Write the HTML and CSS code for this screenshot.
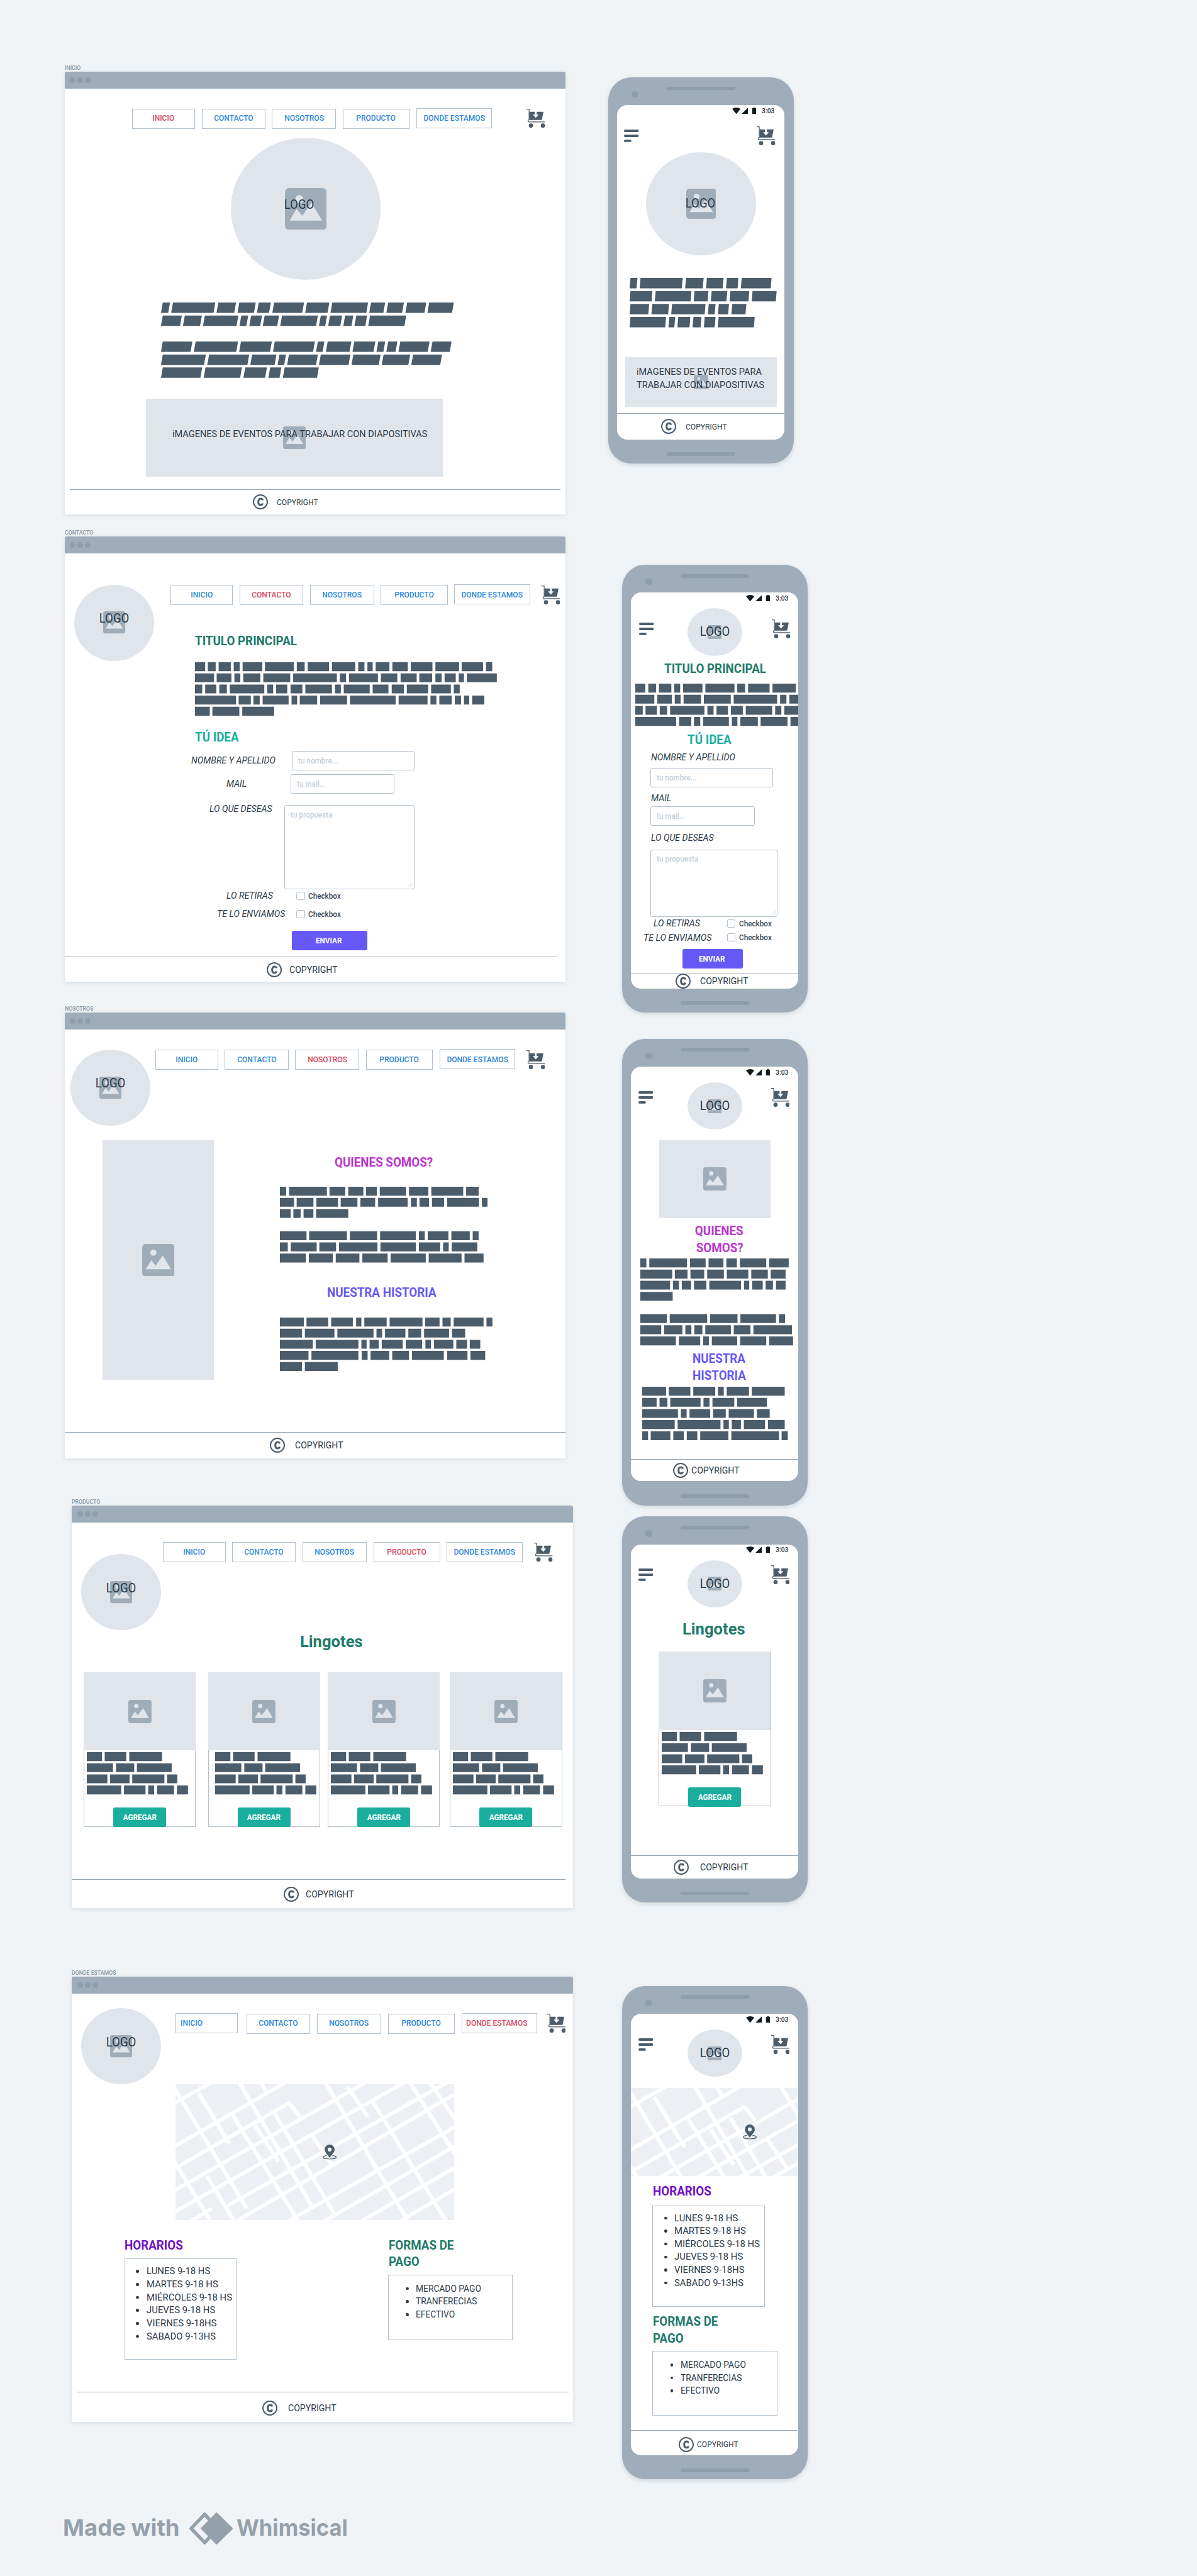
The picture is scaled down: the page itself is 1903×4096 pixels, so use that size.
FILE: index.html
```html
<!DOCTYPE html>
<html lang="es">
<head>
<meta charset="utf-8">
<title>Wireframes - Lingotes</title>
<link rel="stylesheet" href="styles.css">
</head>
<body>
<svg class="defs" aria-hidden="true">
  <symbol id="picture" viewBox="0 0 90 90"><rect width="90" height="90" rx="9" fill="#9eadb9"/><circle cx="31" cy="24" r="8.6" fill="#e0e5ec"/><path d="M10 70L25 45l12.500 15L57 32l23 38z" fill="#e0e5ec"/></symbol>
  <symbol id="cart" viewBox="0 0 40 41"><path d="M0 .8h5.600v23H5.500a2.300 2.300 0 0 0 0 4.600H40" fill="none" stroke="#4b5c6b" stroke-width="1.600"/><path d="M6 6.500h12v6.200h-4.200L20 19.500l6.200-6.800H22V6.500h14.600L33 24H6z" fill="#4b5c6b"/><circle cx="9.500" cy="36.200" r="4.600" fill="#4b5c6b"/><circle cx="35.400" cy="36.200" r="4.600" fill="#4b5c6b"/></symbol>
  <symbol id="copy" viewBox="0 0 32 32"><circle cx="16" cy="16" r="14.700" fill="none" stroke="#4b5c6b" stroke-width="2.700"/><path d="M20.800 12.700c-.5-2.200-2.200-3.300-4.300-3.300-3.200 0-4.900 2.200-4.900 6.600s1.700 6.600 4.900 6.600c2.100 0 3.800-1.100 4.300-3.300" fill="none" stroke="#4b5c6b" stroke-width="4"/></symbol>
  <symbol id="menu" viewBox="0 0 32 27"><path d="M2.600 2.700h26.800M2.600 13.500h26.800M2.600 24.300h10.800" stroke="#4b5c6b" stroke-width="5.200" stroke-linecap="round"/></symbol>
  <symbol id="status" viewBox="0 0 52 14"><path d="M0 2.600Q9-2.600 18 2.600L9 14z" fill="#0f1a22"/><path d="M20 14L34 .2V14z" fill="#0f1a22"/><path d="M43 1.200h2.600V0h3.800v1.200H52V14h-9z" fill="#0f1a22"/></symbol>
  <symbol id="pin" viewBox="0 0 30 32"><path d="M9 23.500C3.800 24.300.9 25.600.9 27.200c0 2.300 6.300 4 14.100 4s14.100-1.700 14.100-4c0-1.600-2.900-2.900-8.100-3.700" fill="none" stroke="#4b5c6b" stroke-width="1.700"/><path fill-rule="evenodd" d="M15 28.500C11 21.500 4.300 17 4.300 10.700a10.700 10.700 0 0 1 21.400 0C25.700 17 19 21.500 15 28.500zM15 15a4.200 4.200 0 1 0 0-8.400 4.200 4.200 0 0 0 0 8.400z" fill="#4b5c6b"/></symbol>
  <symbol id="streets" viewBox="0 0 840 459">
    <g fill="none" stroke="#fff" stroke-width="12">
      <path d="M-10 69L110-8M-10 215L335-8M-10 290L345 62M-10 364L580-10M-10 436L700-12M60 544L840 35M158 410l700-440M250 520L850 140M360 520L850 205M470 520L850 278M590 520L850 350M-10 500L110 420"/>
      <path d="M-10 0L215 420M70 30l92 170M190-10l220 420M255-10l20 38M340 60l35 50M450-10L700 460M520 10l60 100M590 50l230 420M705-10l140 250M765-10l80 130M-10 250L110 470M170 100l210 380M240 140l70 120M410 170l60 100M95 310l80 150M300 100l180 340"/>
    </g>
  </symbol>
</svg>

<div class="board">
  <div class="desktop-column">

    <p class="label">INICIO</p>
    <section class="frame home">
      <header class="bar"><i></i><i></i><i></i></header>
      <div class="top">
        <nav><a class="on"><span>INICIO</span></a><a><span>CONTACTO</span></a><a><span>NOSOTROS</span></a><a><span>PRODUCTO</span></a><a><span>DONDE ESTAMOS</span></a></nav>
        <svg class="cart"><use href="#cart"/></svg>
      </div>
      <div class="logo"><svg><use href="#picture"/></svg><b>LOGO</b></div>
      <svg class="bars italic" viewBox="0 0 895 60" preserveAspectRatio="none">
        <path d="M0 4h900" stroke-dasharray="22 9 129 9 54 10 50 9 37 10 91 9 68 9 109 9 43 9 48 10 58 9 75 2000"/>
        <path d="M0 14h900" stroke-dasharray="58 9 52 9 102 9 21 9 33 8 44 9 109 9 19 9 37 9 25 9 33 9 110 2000"/>
        <path d="M0 34h900" stroke-dasharray="90 10 129 9 94 9 122 9 20 10 72 9 64 9 21 9 28 9 89 9 58 2000"/>
        <path d="M0 44h900" stroke-dasharray="131 10 122 9 74 9 20 9 88 9 90 9 83 9 81 9 88 2000"/>
        <path d="M0 54h900" stroke-dasharray="120 10 111 10 66 10 34 10 104 2000"/>
      </svg>
      <div class="slides"><svg><use href="#picture"/></svg><b>iMAGENES DE EVENTOS PARA TRABAJAR CON DIAPOSITIVAS</b></div>
      <footer class="foot small"><svg><use href="#copy"/></svg><span>COPYRIGHT</span></footer>
    </section>

    <p class="label">CONTACTO</p>
    <section class="frame contact">
      <header class="bar"><i></i><i></i><i></i></header>
      <div class="split">
        <div class="logo"><svg><use href="#picture"/></svg><b>LOGO</b></div>
        <div class="main">
          <div class="top">
            <nav><a><span>INICIO</span></a><a class="on"><span>CONTACTO</span></a><a><span>NOSOTROS</span></a><a><span>PRODUCTO</span></a><a><span>DONDE ESTAMOS</span></a></nav>
            <svg class="cart"><use href="#cart"/></svg>
          </div>
          <h2 class="green">TITULO PRINCIPAL</h2>
          <svg class="bars" viewBox="0 0 920 50" preserveAspectRatio="none">
            <path d="M0 4h920" stroke-dasharray="31 8 24 9 37 9 18 9 60 8 88 9 24 9 65 9 71 9 19 9 16 9 42 9 47 9 66 9 72 8 65 9 19 2000"/>
            <path d="M0 14h920" stroke-dasharray="58 8 45 9 18 9 52 9 82 9 133 9 19 9 88 9 50 10 49 8 39 10 19 9 34 9 16 9 91 2000"/>
            <path d="M0 24h920" stroke-dasharray="22 9 34 9 23 9 105 9 18 9 34 10 36 9 81 9 18 9 79 9 48 10 37 9 65 9 60 9 18 2000"/>
            <path d="M0 34h920" stroke-dasharray="125 8 37 8 19 9 79 9 17 8 53 9 82 9 139 9 88 9 18 9 38 9 19 9 16 9 37 2000"/>
            <path d="M0 44h920" stroke-dasharray="45 8 82 9 97 2000"/>
          </svg>
          <h2 class="teal idea">TÚ IDEA</h2>
          <div class="row name"><em>NOMBRE Y APELLIDO</em><div class="input"><span>tu nombre...</span></div></div>
          <div class="row mail"><em>MAIL</em><div class="input"><span>tu mail...</span></div></div>
          <div class="row wish"><em>LO QUE DESEAS</em><div class="input area"><span>tu propuesta</span><svg viewBox="0 0 9 9"><path d="M0 9L9 0M4.500 9L9 4.500"/></svg></div></div>
          <div class="row pickup"><em>LO RETIRAS</em><i class="check"></i><span>Checkbox</span></div>
          <div class="row send"><em>TE LO ENVIAMOS</em><i class="check"></i><span>Checkbox</span></div>
          <div class="button violet-bg"><span>ENVIAR</span></div>
        </div>
      </div>
      <footer class="foot"><svg><use href="#copy"/></svg><span>COPYRIGHT</span></footer>
    </section>

    <p class="label">NOSOTROS</p>
    <section class="frame about">
      <header class="bar"><i></i><i></i><i></i></header>
      <div class="top">
        <div class="logo"><svg><use href="#picture"/></svg><b>LOGO</b></div>
        <nav><a><span>INICIO</span></a><a><span>CONTACTO</span></a><a class="on"><span>NOSOTROS</span></a><a><span>PRODUCTO</span></a><a><span>DONDE ESTAMOS</span></a></nav>
        <svg class="cart"><use href="#cart"/></svg>
      </div>
      <div class="split">
        <div class="photo"><svg><use href="#picture"/></svg></div>
        <div class="main">
          <h2 class="pink">QUIENES SOMOS?</h2>
          <svg class="bars who" viewBox="0 0 650 70" preserveAspectRatio="none">
            <path d="M0 4h650" stroke-dasharray="19 9 115 8 48 9 46 8 33 9 80 9 59 9 97 9 38 2000"/>
            <path d="M0 14h650" stroke-dasharray="43 8 51 9 66 8 51 9 45 9 90 10 18 8 29 9 37 9 97 9 17 2000"/>
            <path d="M0 24h650" stroke-dasharray="33 8 22 9 30 8 98 2000"/>
            <path d="M0 44h650" stroke-dasharray="81 8 115 9 83 9 109 9 18 9 63 9 56 9 18 2000"/>
            <path d="M0 54h650" stroke-dasharray="24 9 79 8 51 9 117 9 108 9 65 9 17 9 78 2000"/>
            <path d="M0 64h650" stroke-dasharray="79 9 73 9 72 9 77 9 107 9 100 9 58 2000"/>
          </svg>
          <h2 class="violet history">NUESTRA HISTORIA</h2>
          <svg class="bars past" viewBox="0 0 650 50" preserveAspectRatio="none">
            <path d="M0 4h650" stroke-dasharray="73 8 66 9 66 10 16 9 68 9 100 8 44 9 25 9 91 9 18 2000"/>
            <path d="M0 14h650" stroke-dasharray="67 9 90 9 110 9 17 9 62 9 39 9 76 9 40 2000"/>
            <path d="M0 24h650" stroke-dasharray="100 9 130 9 16 9 28 9 64 9 50 10 17 9 59 9 33 8 32 2000"/>
            <path d="M0 34h650" stroke-dasharray="87 9 143 10 18 9 57 9 51 9 97 10 62 9 45 2000"/>
            <path d="M0 44h650" stroke-dasharray="67 9 100 2000"/>
          </svg>
        </div>
      </div>
      <footer class="foot"><svg><use href="#copy"/></svg><span>COPYRIGHT</span></footer>
    </section>

    <p class="label shifted">PRODUCTO</p>
    <section class="frame shop shifted">
      <header class="bar"><i></i><i></i><i></i></header>
      <div class="top">
        <div class="logo"><svg><use href="#picture"/></svg><b>LOGO</b></div>
        <nav><a><span>INICIO</span></a><a><span>CONTACTO</span></a><a><span>NOSOTROS</span></a><a class="on"><span>PRODUCTO</span></a><a><span>DONDE ESTAMOS</span></a></nav>
        <svg class="cart"><use href="#cart"/></svg>
      </div>
      <h1>Lingotes</h1>
      <div class="cards">
        <article class="card">
          <div class="photo"><svg><use href="#picture"/></svg></div>
          <svg class="bars" viewBox="0 0 310 40" preserveAspectRatio="none"><path d="M0 4h310" stroke-dasharray="46 8 65 9 99 2000"/><path d="M0 14h310" stroke-dasharray="79 9 55 8 105 2000"/><path d="M0 24h310" stroke-dasharray="62 8 59 8 97 8 31 2000"/><path d="M0 34h310" stroke-dasharray="104 8 65 8 18 9 51 9 33 2000"/></svg>
          <div class="button teal-bg"><span>AGREGAR</span></div>
        </article>
        <article class="card">
          <div class="photo"><svg><use href="#picture"/></svg></div>
          <svg class="bars" viewBox="0 0 310 40" preserveAspectRatio="none"><path d="M0 4h310" stroke-dasharray="46 8 65 9 99 2000"/><path d="M0 14h310" stroke-dasharray="79 9 55 8 105 2000"/><path d="M0 24h310" stroke-dasharray="62 8 59 8 97 8 31 2000"/><path d="M0 34h310" stroke-dasharray="104 8 65 8 18 9 51 9 33 2000"/></svg>
          <div class="button teal-bg"><span>AGREGAR</span></div>
        </article>
        <article class="card">
          <div class="photo"><svg><use href="#picture"/></svg></div>
          <svg class="bars" viewBox="0 0 310 40" preserveAspectRatio="none"><path d="M0 4h310" stroke-dasharray="46 8 65 9 99 2000"/><path d="M0 14h310" stroke-dasharray="79 9 55 8 105 2000"/><path d="M0 24h310" stroke-dasharray="62 8 59 8 97 8 31 2000"/><path d="M0 34h310" stroke-dasharray="104 8 65 8 18 9 51 9 33 2000"/></svg>
          <div class="button teal-bg"><span>AGREGAR</span></div>
        </article>
        <article class="card">
          <div class="photo"><svg><use href="#picture"/></svg></div>
          <svg class="bars" viewBox="0 0 310 40" preserveAspectRatio="none"><path d="M0 4h310" stroke-dasharray="46 8 65 9 99 2000"/><path d="M0 14h310" stroke-dasharray="79 9 55 8 105 2000"/><path d="M0 24h310" stroke-dasharray="62 8 59 8 97 8 31 2000"/><path d="M0 34h310" stroke-dasharray="104 8 65 8 18 9 51 9 33 2000"/></svg>
          <div class="button teal-bg"><span>AGREGAR</span></div>
        </article>
      </div>
      <footer class="foot"><svg><use href="#copy"/></svg><span>COPYRIGHT</span></footer>
    </section>

    <p class="label shifted">DONDE ESTAMOS</p>
    <section class="frame place shifted">
      <header class="bar"><i></i><i></i><i></i></header>
      <div class="top">
        <div class="logo"><svg><use href="#picture"/></svg><b>LOGO</b></div>
        <nav><a><span>INICIO</span></a><a><span>CONTACTO</span></a><a><span>NOSOTROS</span></a><a><span>PRODUCTO</span></a><a class="on"><span>DONDE ESTAMOS</span></a></nav>
        <svg class="cart"><use href="#cart"/></svg>
      </div>
      <div class="map"><svg class="streets" viewBox="0 0 840 459" preserveAspectRatio="none"><use href="#streets" width="840" height="459"/></svg><svg class="pin"><use href="#pin"/></svg></div>
      <div class="info">
        <div class="hours">
          <h2 class="purple">HORARIOS</h2>
          <ul><li><span>LUNES 9-18 HS</span></li><li><span>MARTES 9-18 HS</span></li><li><span>MIÉRCOLES 9-18 HS</span></li><li><span>JUEVES 9-18 HS</span></li><li><span>VIERNES 9-18HS</span></li><li><span>SABADO 9-13HS</span></li></ul>
        </div>
        <div class="pay">
          <h2 class="green">FORMAS DE<br>PAGO</h2>
          <ul><li><span>MERCADO PAGO</span></li><li><span>TRANFERECIAS</span></li><li><span>EFECTIVO</span></li></ul>
        </div>
      </div>
      <footer class="foot"><svg><use href="#copy"/></svg><span>COPYRIGHT</span></footer>
    </section>

    <div class="brand">
      <span class="made">Made with</span>
      <svg viewBox="0 0 95 69"><path d="M34.500 4L62 34.500 34.500 65 5.200 34.500z" fill="none" stroke="#94a1ab" stroke-width="7.500" stroke-linejoin="round"/><path d="M60 2.500L92.500 34.500 60 66.500 28.500 34.500z" fill="#94a1ab" stroke="#94a1ab" stroke-width="4.500" stroke-linejoin="round"/></svg>
      <span class="whim">Whimsical</span>
    </div>
  </div>

  <div class="phone-column">

    <section class="phone p-home">
      <div class="screen">
        <div class="status"><svg><use href="#status"/></svg><b>3:03</b></div>
        <div class="head"><svg class="menu"><use href="#menu"/></svg><svg class="cart"><use href="#cart"/></svg></div>
        <div class="logo"><svg><use href="#picture"/></svg><b>LOGO</b></div>
        <svg class="bars italic" viewBox="0 0 960 40" preserveAspectRatio="none">
          <path d="M0 4h960" stroke-dasharray="45 20 273 21 114 21 108 21 75 21 193 2000"/>
          <path d="M0 14h960" stroke-dasharray="142 21 231 20 90 21 101 20 122 21 156 2000"/>
          <path d="M0 24h960" stroke-dasharray="121 20 108 20 216 21 44 21 66 21 91 2000"/>
          <path d="M0 34h960" stroke-dasharray="230 21 38 20 78 20 52 21 70 20 233 2000"/>
        </svg>
        <div class="slides"><svg><use href="#picture"/></svg><b>iMAGENES DE EVENTOS PARA<br>TRABAJAR CON DIAPOSITIVAS</b></div>
        <footer class="foot small"><svg><use href="#copy"/></svg><span>COPYRIGHT</span></footer>
      </div>
    </section>

    <section class="phone p-contact">
      <div class="screen">
        <div class="status"><svg><use href="#status"/></svg><b>3:03</b></div>
        <div class="head"><svg class="menu"><use href="#menu"/></svg><div class="logo"><svg><use href="#picture"/></svg><b>LOGO</b></div><svg class="cart"><use href="#cart"/></svg></div>
        <h2 class="green">TITULO PRINCIPAL</h2>
        <svg class="bars" viewBox="0 0 1053 40" preserveAspectRatio="none">
          <path d="M0 4h1053" stroke-dasharray="65 19 50 19 80 19 38 19 125 19 188 18 51 19 139 19 151 2000"/>
          <path d="M0 14h1053" stroke-dasharray="123 19 95 18 38 19 113 18 174 19 281 19 41 19 157 2000"/>
          <path d="M0 24h1053" stroke-dasharray="48 18 74 18 48 19 222 19 40 19 74 19 77 19 171 19 40 19 190 2000"/>
          <path d="M0 34h1053" stroke-dasharray="264 19 79 17 41 18 167 19 36 19 113 18 174 19 150 2000"/>
        </svg>
        <h2 class="teal idea">TÚ IDEA</h2>
        <em class="lb1">NOMBRE Y APELLIDO</em>
        <div class="input in1"><span>tu nombre...</span></div>
        <em class="lb2">MAIL</em>
        <div class="input in2"><span>tu mail...</span></div>
        <em class="lb3">LO QUE DESEAS</em>
        <div class="input area"><span>tu propuesta</span><svg viewBox="0 0 9 9"><path d="M0 9L9 0M4.500 9L9 4.500"/></svg></div>
        <div class="row pickup"><em>LO RETIRAS</em><i class="check"></i><span>Checkbox</span></div>
        <div class="row send"><em>TE LO ENVIAMOS</em><i class="check"></i><span>Checkbox</span></div>
        <div class="button violet-bg"><span>ENVIAR</span></div>
        <footer class="foot"><svg><use href="#copy"/></svg><span>COPYRIGHT</span></footer>
      </div>
    </section>

    <section class="phone p-about">
      <div class="screen">
        <div class="status"><svg><use href="#status"/></svg><b>3:03</b></div>
        <div class="head"><svg class="menu"><use href="#menu"/></svg><div class="logo"><svg><use href="#picture"/></svg><b>LOGO</b></div><svg class="cart"><use href="#cart"/></svg></div>
        <div class="photo"><svg><use href="#picture"/></svg></div>
        <h2 class="pink two">QUIENES<br>SOMOS?</h2>
        <svg class="bars who" viewBox="0 0 990 80" preserveAspectRatio="none">
          <path d="M0 4h990" stroke-dasharray="39 19 244 19 101 19 96 19 68 19 171 19 126 2000"/>
          <path d="M0 14h990" stroke-dasharray="206 17 82 19 89 19 108 19 139 19 107 19 96 2000"/>
          <path d="M0 24h990" stroke-dasharray="192 19 39 18 60 19 80 19 205 19 34 19 68 19 47 20 62 2000"/>
          <path d="M0 34h990" stroke-dasharray="209 2000"/>
          <path d="M0 54h990" stroke-dasharray="171 19 242 19 177 19 230 19 39 2000"/>
          <path d="M0 64h990" stroke-dasharray="135 19 118 19 39 19 52 19 165 19 108 19 249 2000"/>
          <path d="M0 74h990" stroke-dasharray="230 19 138 19 37 19 164 19 169 19 154 2000"/>
        </svg>
        <h2 class="violet two history">NUESTRA<br>HISTORIA</h2>
        <svg class="bars past" viewBox="0 0 945 50" preserveAspectRatio="none">
          <path d="M0 4h945" stroke-dasharray="154 18 139 19 142 18 37 19 144 18 213 2000"/>
          <path d="M0 14h945" stroke-dasharray="93 19 51 18 196 19 39 19 141 19 192 2000"/>
          <path d="M0 24h945" stroke-dasharray="231 19 37 19 133 19 82 19 163 19 83 2000"/>
          <path d="M0 34h945" stroke-dasharray="210 19 277 19 35 19 59 19 137 19 108 2000"/>
          <path d="M0 44h945" stroke-dasharray="38 17 127 19 68 19 68 19 182 19 308 17 40 2000"/>
        </svg>
        <footer class="foot"><svg><use href="#copy"/></svg><span>COPYRIGHT</span></footer>
      </div>
    </section>

    <section class="phone p-shop">
      <div class="screen">
        <div class="status"><svg><use href="#status"/></svg><b>3:03</b></div>
        <div class="head"><svg class="menu"><use href="#menu"/></svg><div class="logo"><svg><use href="#picture"/></svg><b>LOGO</b></div><svg class="cart"><use href="#cart"/></svg></div>
        <h1>Lingotes</h1>
        <article class="card">
          <div class="photo"><svg><use href="#picture"/></svg></div>
          <svg class="bars" viewBox="0 0 310 40" preserveAspectRatio="none"><path d="M0 4h310" stroke-dasharray="46 8 65 9 99 2000"/><path d="M0 14h310" stroke-dasharray="79 9 55 8 105 2000"/><path d="M0 24h310" stroke-dasharray="62 8 59 8 97 8 31 2000"/><path d="M0 34h310" stroke-dasharray="104 8 65 8 18 9 51 9 33 2000"/></svg>
          <div class="button teal-bg"><span>AGREGAR</span></div>
        </article>
        <footer class="foot"><svg><use href="#copy"/></svg><span>COPYRIGHT</span></footer>
      </div>
    </section>

    <section class="phone p-place">
      <div class="screen">
        <div class="status"><svg><use href="#status"/></svg><b>3:03</b></div>
        <div class="head"><svg class="menu"><use href="#menu"/></svg><div class="logo"><svg><use href="#picture"/></svg><b>LOGO</b></div><svg class="cart"><use href="#cart"/></svg></div>
        <div class="map"><svg class="streets" viewBox="0 0 504 297.500" preserveAspectRatio="none"><use href="#streets" width="840" height="459"/></svg><svg class="pin"><use href="#pin"/></svg></div>
        <div class="hours">
          <h2 class="purple">HORARIOS</h2>
          <ul><li><span>LUNES 9-18 HS</span></li><li><span>MARTES 9-18 HS</span></li><li><span>MIÉRCOLES 9-18 HS</span></li><li><span>JUEVES 9-18 HS</span></li><li><span>VIERNES 9-18HS</span></li><li><span>SABADO 9-13HS</span></li></ul>
        </div>
        <div class="pay">
          <h2 class="green">FORMAS DE<br>PAGO</h2>
          <ul><li><span>MERCADO PAGO</span></li><li><span>TRANFERECIAS</span></li><li><span>EFECTIVO</span></li></ul>
        </div>
        <footer class="foot small"><svg><use href="#copy"/></svg><span>COPYRIGHT</span></footer>
      </div>
    </section>
  </div>
</div>
</body>
</html>
```
FILE: styles.css
```css
* { box-sizing: border-box; margin: 0; padding: 0; }
html, body { background: #f0f4f7; overflow: hidden; }
body { font-family: Roboto, "Liberation Sans", sans-serif; color: #2c3b49; }
svg { display: block; flex: none; }
.defs { position: absolute; width: 0; height: 0; }

/* The canvas is authored at 2579 x 5552 and scaled down as a whole. */
.board { zoom: .73788; width: 2579px; height: 5552px; display: flex; align-items: flex-start; }
.desktop-column { width: 1096px; margin-left: 139px; padding-top: 137px; }
.phone-column { margin-left: 75px; padding-top: 166.500px; }

nav span, .foot span, .logo b, .slides b, em, .row span, .input span, .button span, li span, h1, h2, .label, .status b {
  display: block; white-space: nowrap; flex: none; transform: scaleX(.91); transform-origin: left center;
}
nav span, .logo b, .pay li span { transform: scaleX(.935); }
.slides b, em { transform: scaleX(.962); }
.hours li span { transform: scaleX(1.01); }
h1, h2 { transform: translateY(1.500px) scaleX(.96); }
nav span, .button span, .logo b { transform-origin: center; }

.label { height: 18px; font-size: 13px; line-height: 18px; font-weight: 500; color: #8796a3; }
.shifted { margin-left: 16px; }
.frame { width: 1080px; display: flex; flex-direction: column; background: #fff; border-radius: 4px 4px 0 0; box-shadow: 0 2px 8px rgba(60, 80, 100, .13); }
.bar { height: 36px; flex: none; display: flex; align-items: center; gap: 4px; padding-left: 12px; background: #9eadb9; border-radius: 4px 4px 0 0; }
.bar i { width: 12px; height: 12px; border-radius: 50%; background: #8e9eac; }

.top, .split, .cards, .info { display: flex; align-items: flex-start; flex: none; }
nav { display: flex; gap: 14.500px; flex: none; }
nav a { height: 43.500px; border: 2px solid #b2c1ce; display: flex; align-items: center; justify-content: center; color: #2d88de; font-size: 17.500px; font-weight: 500; padding-bottom: 2px; }
nav a:nth-child(1) { width: 135px; }
nav a:nth-child(2) { width: 137px; }
nav a:nth-child(3) { width: 138px; }
nav a:nth-child(4) { width: 144px; }
nav a:nth-child(5) { width: 163px; margin-top: -1px; margin-bottom: 1px; padding-bottom: 0; }
nav .on { color: #da4a5f; }
.cart { width: 40px; height: 41px; }
.menu { width: 32px; height: 27px; }

.logo { position: relative; flex: none; width: 171.500px; height: 164px; border-radius: 50%; background: #e0e5ec; display: flex; align-items: center; justify-content: center; }
.logo svg { width: 48px; height: 48px; }
.logo b { position: absolute; font-size: 27px; font-weight: 400; line-height: 32px; margin-bottom: 18px; }

.photo { flex: none; background: #e0e5ec; display: flex; align-items: center; justify-content: center; }
.photo svg { width: 50px; height: 50px; }

.bars { fill: none; stroke: #4b5c6b; stroke-width: 8; }
.italic path { transform-box: fill-box; transform-origin: 0 0; transform: matrix(1, 0, -.7, 1, 2.600, 0); }

.slides { position: relative; flex: none; background: #e0e5ec; display: flex; align-items: center; justify-content: center; }
.slides b { position: absolute; font-size: 20.500px; line-height: 28px; font-weight: 400; }

.foot { margin-top: auto; flex: none; border-top: 2px solid #93a4b1; display: flex; align-items: center; font-size: 21px; }
.foot svg { width: 32.500px; height: 32.500px; }
.foot.small { font-size: 18px; }

h2 { font-size: 26.500px; line-height: 36px; font-weight: 700; }
h1 { font-size: 34px; line-height: 40px; font-weight: 700; color: #207a69; transform: scaleX(1.02); }
.green { color: #207a69; }
.teal { color: #1aae9f; }
.pink { color: #bd34d1; }
.violet { color: #6558f5; }
.purple { color: #730fc3; }
.violet-bg { background: #6558f5; }
.teal-bg { background: #1aae9f; }

em { font-size: 20px; line-height: 28px; }
.row { display: flex; align-items: center; flex: none; }
.row span { font-size: 17.500px; font-weight: 500; color: #3a4a59; }
.input { flex: none; border: 2px solid #b2c1ce; border-radius: 4px; height: 42px; padding-left: 12px; display: flex; align-items: center; position: relative; }
.input span, .row .input span { font-size: 17.500px; font-weight: 500; color: #c4d0db; }
.area { align-items: flex-start; padding-top: 9px; }
.area svg { position: absolute; right: 2px; bottom: 3px; width: 9px; height: 9px; fill: none; stroke: #b8c4cf; stroke-width: 1; }
.check { width: 18px; height: 18px; border: 2px solid #b2c1ce; border-radius: 3px; flex: none; }
.check + span { margin-left: 7px; }
.button { height: 42px; flex: none; border-radius: 4px; display: flex; align-items: center; justify-content: center; color: #fff; font-size: 17.500px; font-weight: 700; }
.violet-bg span { transform: translateX(-1.500px) scaleX(.91); }

/* Inicio */
.home { height: 953px; margin-bottom: 30px; }
.home .top { height: 106px; }
.home nav { margin: 43px 0 0 146px; }
.home .cart { margin: 44px 0 0 75px; }
.home .logo { width: 323.500px; height: 305.500px; margin-left: 358px; }
.home .logo svg { width: 90px; height: 90px; }
.home .logo b { margin: 0 28px 17px 0; }
.home .bars { width: 633.500px; height: 168px; margin: 49px 0 0 208px; }
.home .slides { width: 640px; height: 168px; margin: 39.500px 0 0 175px; }
.home .slides svg { width: 49px; height: 49px; }
.home .slides b { left: 57px; top: 63px; }
.home .foot { height: 54px; margin-left: 12px; margin-right: 12px; padding-left: 394px; gap: 18.500px; }

/* Contacto */
.contact { height: 960px; margin-bottom: 48.500px; }
.contact .logo { margin: 68px 0 0 21px; }
.contact nav { margin: 68px 0 0 35.500px; }
.contact .cart { margin: 70px 0 0 25px; }
.contact h2 { margin: 60.500px 0 0 88.500px; }
.contact .bars { width: 651px; height: 120px; margin: 27.500px 0 0 88.500px; }
.contact .idea { margin-top: 23.500px; }
.name { margin-top: 11px; padding-left: 80.500px; }
.name em { width: 217px; }
.name .input { width: 264px; }
.mail { margin-top: 8px; padding-left: 156.500px; }
.mail em { width: 138px; }
.mail .input { width: 223.500px; }
.contact .wish { margin-top: 25px; padding-left: 119.500px; align-items: flex-start; }
.wish em { width: 161.500px; margin-top: -5px; }
.wish .input { width: 280px; height: 181px; }
.contact .pickup { margin-top: 1px; padding-left: 156.500px; }
.contact .pickup em { width: 151px; }
.contact .send { margin-top: 11px; padding-left: 135.500px; }
.contact .send em { width: 172px; }
.contact .button { width: 162px; margin: 22px 0 0 297.500px; }
.contact .foot { height: 54.500px; margin-right: 20px; padding-left: 436px; gap: 16.500px; }

/* Nosotros */
.about { height: 960px; margin-bottom: 84.500px; }
.about .top { height: 239px; }
.about .logo { margin: 44px 0 0 13px; }
.about nav { margin: 43.500px 0 0 11.500px; }
.about .cart { margin: 45px 0 0 25px; }
.about .photo { width: 240px; height: 516px; margin-left: 82px; }
.about .photo svg { width: 70px; height: 70px; }
.about h2 { margin: 29px 0 0 260.500px; }
.about .who { width: 460px; height: 168px; margin: 34.500px 0 0 141.500px; }
.about .history { margin: 43px 0 0 244px; }
.about .past { width: 460px; height: 120px; margin: 35px 0 0 141.500px; }
.about .foot { height: 57px; padding-left: 443px; gap: 20.500px; }

/* Producto */
.shop { height: 867.500px; margin-bottom: 129.500px; }
.shop .top { height: 237px; }
.shop .logo, .place .logo { margin: 68.500px 0 0 20px; }
.shop nav { margin: 42.500px 0 0 4.500px; }
.shop .cart { margin: 44px 0 0 25px; }
.shop h1 { margin-left: 492px; }
.cards { margin: 45px 0 0 25px; }
.card { width: 242px; height: 334px; flex: none; border: 2px solid #b2c1ce; display: flex; flex-direction: column; }
.card .photo { height: 169px; margin: -1px -1px 0; }
.card .bars { width: 221.500px; height: 96px; margin: 3.500px 0 0 6px; }
.card .button { width: 114px; margin: auto auto -2px; }
.card:nth-child(2) { margin-left: 26px; }
.card:nth-child(2) .bars { margin-left: 14.500px; }
.card:nth-child(3) { margin-left: 16px; }
.card:nth-child(4) { margin-left: 21px; }
.shop .foot { height: 63.500px; margin-right: 16px; padding-left: 456px; gap: 15.500px; }

/* Donde estamos */
.place { height: 959.500px; }
.place .top { height: 195.500px; }
.place .logo { margin-top: 32px; }
.place nav { margin: 43px 0 0 31.500px; gap: 15px; }
.place nav a:first-child { margin: -1px 3px 1px 0; justify-content: flex-start; padding: 0 0 0 9px; }
.place nav a:last-child { justify-content: flex-start; padding-left: 8px; }
.place nav a:first-child span, .place nav a:last-child span { transform-origin: left; }
.place .cart { margin: 44px 0 0 21px; }
.map { position: relative; flex: none; background: #ecf0f5; }
.map .streets { width: 100%; height: 100%; }
.map .pin { position: absolute; width: 30px; height: 32px; }
.place .map { width: 600px; height: 292.500px; margin-left: 223px; }
.place .pin { left: 317px; top: 130px; }
.info { margin: 36px 0 0 113px; }
.hours ul, .pay ul { list-style: none; border: 2px solid #b2c1ce; }
.hours h2, .pay h2 { margin-left: 1px; }
.pay h2 { line-height: 36.500px; }
.hours ul { width: 242px; height: 219px; margin-top: 10.500px; padding: 13px 0 0 24px; }
.pay ul { width: 269px; height: 141px; margin-top: 8.500px; padding: 15px 0 0 37px; }
.info .pay { margin-left: 326px; }
li { display: flex; align-items: center; gap: 16px; font-size: 20px; line-height: 28px; }
li::before { content: ""; width: 6px; height: 6px; border-radius: 50%; background: #2c3b49; }
.place .foot { height: 65.500px; margin-left: 10px; margin-right: 10px; padding: 3px 0 0 400px; gap: 23.500px; }

/* Whimsical mark */
.brand { display: flex; align-items: center; margin: 195px 0 0 -3px; font-family: Inter, sans-serif; font-weight: 700; font-size: 48px; line-height: 69px; color: #94a1ab; white-space: nowrap; }
.brand span { transform-origin: left center; flex: none; }
.brand svg { width: 95px; height: 69px; }
.made { width: 271px; transform: scaleX(1.030); }
.whim { margin-left: 7px; transform: scaleX(.975); }

/* Phones */
.phone { position: relative; width: 400px; padding: 60px 20px 52px; margin-left: 30px; background: #9eadb9; border-radius: 50px; box-shadow: 0 3px 8px rgba(60, 80, 100, .16); }
.phone::before, .phone::after { content: ""; position: absolute; left: 126px; width: 148px; height: 8px; border-radius: 4px; background: #8e9eac; }
.phone::before { top: 20px; }
.phone::after { bottom: 16px; }
.screen { height: 100%; background: #fff; border-radius: 22px; overflow: hidden; display: flex; flex-direction: column; }
.screen::before { content: ""; position: absolute; left: 51px; top: 30px; width: 14px; height: 14px; border-radius: 50%; background: #8e9eac; }
.status { height: 24px; flex: none; display: flex; align-items: center; padding-left: 247px; }
.status svg { width: 52px; height: 14px; }
.status b { margin-left: 12px; font-size: 15.500px; font-weight: 500; }
.head { display: flex; align-items: flex-start; flex: none; height: 112px; }
.head .menu { margin: 28.500px 0 0 15px; }
.head .logo { width: 118px; height: 102px; margin: 10px 0 0 74px; }
.head .logo svg { width: 30px; height: 30px; }
.head .logo b { margin: 0; }
.head .cart { margin: 21.500px 0 0 62px; }

.p-home { height: 832.500px; margin-left: 0; }
.p-home .head { height: 77.500px; }
.p-home .head .cart { margin-left: 254px; }
.p-home .logo { width: 237px; height: 222.500px; margin-left: 62px; }
.p-home .logo svg { width: 65px; height: 65px; }
.p-home .logo b { margin: 0 4px 2px 0; }
.p-home .bars { width: 320px; height: 112px; margin: 49px 0 0 27px; }
.p-home .slides { width: 327px; height: 106px; margin: 59px 0 0 17px; }
.p-home .slides svg { width: 31px; height: 31px; }
.p-home .slides b { left: 24px; top: 17px; }
.p-home .foot { height: 57px; padding-left: 95px; gap: 20px; }

.p-contact { height: 965px; margin-top: 218px; }
.p-contact .menu { margin: 41px 0 0 17px; }
.p-contact .head .logo { margin-left: 72px; }
.p-contact .head .cart { margin: 34px 0 0 64px; }
.p-contact h2 { margin: 10.500px 0 0 71px; }
.p-contact .bars { width: 351px; height: 96px; margin: 13.500px 0 0 9px; }
.p-contact .idea { margin: 7px 0 0 121px; }
.p-contact .lb1 { margin: 6px 0 8.500px 43px; }
.p-contact .lb2 { margin: 9.500px 0 3px 43px; }
.p-contact .lb3 { margin: 13px 0 10.500px 43px; }
.p-contact .input { margin-left: 41px; }
.p-contact .in1 { width: 264px; }
.p-contact .in2 { width: 226px; }
.p-contact .area { width: 274px; height: 145px; }
.p-contact .pickup { padding-left: 48px; margin-top: 1px; }
.p-contact .pickup em { width: 159px; }
.p-contact .send { padding-left: 27px; margin-top: 0; }
.p-contact .send em { width: 180px; padding-top: 3px; }
.p-contact .button { width: 129px; margin: 10.500px 0 0 111px; }
.p-contact .foot { height: 32px; padding-left: 96px; gap: 20.500px; line-height: 28px; }

.p-about { height: 1005.500px; margin-top: 56.500px; }
.p-about .photo { width: 240px; height: 168.500px; margin: 22px 0 0 60px; }
.two { line-height: 37px; }
.p-about h2.pink { width: 242px; text-align: right; transform-origin: right center; margin: 8.500px 0 0; }
.p-about .who { width: 330px; height: 192px; margin: 4px 0 0 20px; }
.p-about .history { margin: 5px 0 0 132px; }
.p-about .past { width: 315px; height: 120px; margin: 5.500px 0 0 24px; }
.p-about .foot { height: 48px; padding-left: 90px; gap: 7px; }

.p-shop { height: 832px; margin-top: 24px; }
.p-shop h1 { margin: 27px 0 0 111px; }
.p-shop .card { margin: 28px 0 0 59px; }
.p-shop .card .bars { margin-left: 6px; }
.p-shop .foot { height: 50px; padding-left: 92px; gap: 24.500px; }

.p-place { height: 1063.500px; margin-top: 179.500px; }
.p-place .map { width: 360px; height: 189.500px; margin-top: 24px; }
.p-place .pin { left: 240px; top: 78.500px; }
.p-place .hours { margin: 15.500px 0 0 46px; }
.p-place .hours ul { margin-top: 12px; height: 218px; padding-top: 12px; }
.p-place .pay { margin: 14px 0 0 46px; }
.p-place .pay ul { height: 140px; }
.p-place .foot { height: 54px; margin-right: 3px; padding: 6px 0 0 103px; gap: 6.500px; }
```
